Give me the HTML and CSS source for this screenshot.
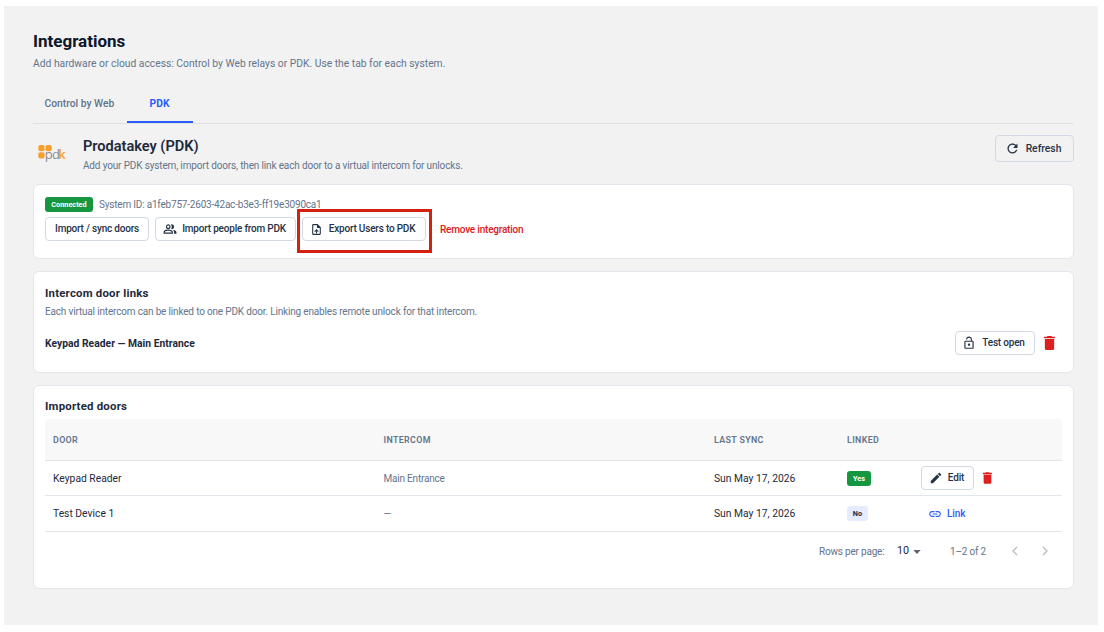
FILE: index.html
```html
<!DOCTYPE html>
<html lang="en">
<head>
<meta charset="utf-8">
<title>Integrations</title>
<link rel="stylesheet" href="styles.css">
</head>
<body>
<main class="page">
  <h1 class="page-title">Integrations</h1>
  <p class="page-sub">Add hardware or cloud access: Control by Web relays or PDK. Use the tab for each system.</p>
  <nav class="tabs">
    <a class="tab">Control by Web</a>
    <a class="tab tab-active">PDK</a>
  </nav>

  <header class="provider">
    <svg class="logo" viewBox="0 0 30 20" width="30" height="20">
      <g fill="#f5a22d"><rect x="0.300" y="0" width="6.3" height="6.3" rx="2"/><rect x="7.500" y="0" width="6.3" height="6.3" rx="2"/><rect x="0.300" y="7.2" width="6.3" height="6.3" rx="2"/></g>
      <text class="logo-text" x="6.8" y="14.2" fill="#888d96">pd</text><text class="logo-text logo-k" x="20.2" y="14.2" fill="#f5a22d">k</text>
    </svg>
    <div class="provider-text">
      <h2 class="provider-name">Prodatakey (PDK)</h2>
      <p class="provider-sub">Add your PDK system, import doors, then link each door to a virtual intercom for unlocks.</p>
    </div>
    <button class="btn btn-refresh"><svg class="icon" viewBox="0 0 24 24" width="15" height="15"><path d="M17.65 6.35C16.2 4.9 14.21 4 12 4c-4.42 0-7.99 3.58-7.99 8s3.57 8 7.99 8c3.73 0 6.84-2.55 7.73-6h-2.08c-.82 2.33-3.04 4-5.65 4-3.31 0-6-2.69-6-6s2.69-6 6-6c1.66 0 3.14.69 4.22 1.78L13 11h7V4l-2.35 2.35z"/></svg><span>Refresh</span></button>
  </header>

  <section class="card card-system">
    <div class="status"><span class="chip chip-green chip-connected">Connected</span><span class="system-id">System ID: a1feb757-2603-42ac-b3e3-ff19e3090ca1</span></div>
    <div class="actions">
      <button class="btn btn-sync"><span>Import / sync doors</span></button>
      <button class="btn btn-people"><svg class="icon" viewBox="0 0 24 24" width="14" height="14"><path d="M16.67 13.13C18.04 14.06 19 15.32 19 17v3h4v-3c0-2.18-3.57-3.47-6.33-3.87zM15 12c2.21 0 4-1.79 4-4s-1.79-4-4-4c-.47 0-.91.1-1.33.24C14.5 5.27 15 6.58 15 8s-.5 2.73-1.33 3.76c.42.14.86.24 1.33.24zM9 12c2.21 0 4-1.79 4-4s-1.79-4-4-4-4 1.79-4 4 1.79 4 4 4zm0-6c1.1 0 2 .9 2 2s-.9 2-2 2-2-.9-2-2 .9-2 2-2zM9 13c-2.67 0-8 1.34-8 4v3h16v-3c0-2.66-5.33-4-8-4zm6 5H3v-.99C3.2 16.29 6.3 15 9 15s5.8 1.29 6 2v1z"/></svg><span>Import people from PDK</span></button>
      <div class="export"><button class="btn btn-export"><svg class="icon" viewBox="0 0 24 24" width="13" height="13"><path d="M14 2H6c-1.1 0-1.99.9-1.99 2L4 20c0 1.1.89 2 1.99 2H18c1.1 0 2-.9 2-2V8l-6-6zm4 18H6V4h7v5h5v11zM8 15.01l1.41 1.41L11 14.84V19h2v-4.16l1.59 1.59L16 15.01 12.01 11 8 15.01z"/></svg><span>Export Users to PDK</span></button><i class="highlight"></i></div>
      <a class="remove">Remove integration</a>
    </div>
  </section>

  <section class="card card-links">
    <h3 class="card-title">Intercom door links</h3>
    <p class="card-sub">Each virtual intercom can be linked to one PDK door. Linking enables remote unlock for that intercom.</p>
    <div class="link-row">
      <strong class="link-name">Keypad Reader — Main Entrance</strong>
      <button class="btn btn-test"><svg class="icon" viewBox="0 0 24 24" width="14" height="14"><path d="M12 17c1.1 0 2-.9 2-2s-.9-2-2-2-2 .9-2 2 .9 2 2 2zm6-9h-1V6c0-2.76-2.24-5-5-5S7 3.24 7 6h1.900c0-1.710 1.390-3.100 3.100-3.100 1.710 0 3.100 1.390 3.100 3.100v2H6c-1.1 0-2 .9-2 2v10c0 1.100.9 2 2 2h12c1.100 0 2-.9 2-2V10c0-1.100-.9-2-2-2zm0 12H6V10h12v10z"/></svg><span>Test open</span></button>
      <svg class="trash" viewBox="5 3 14 18" width="11" height="14"><path d="M6 19c0 1.1.9 2 2 2h8c1.1 0 2-.9 2-2V7H6v12zM19 4h-3.500l-1-1h-5l-1 1H5v2h14V4z"/></svg>
    </div>
  </section>

  <section class="card card-doors">
    <h3 class="card-title">Imported doors</h3>
    <div class="table">
      <div class="row row-head"><span>DOOR</span><span>INTERCOM</span><span>LAST SYNC</span><span>LINKED</span><span></span></div>
      <div class="row row-first"><span>Keypad Reader</span><span class="muted">Main Entrance</span><span class="date">Sun May 17, 2026</span><span><b class="chip chip-green chip-yes">Yes</b></span>
        <span class="row-actions"><button class="btn btn-edit"><svg class="icon" viewBox="0 0 24 24" width="14" height="14"><path d="M3 17.250V21h3.750L17.810 9.940l-3.750-3.750L3 17.250zM20.710 7.040c.39-.39.39-1.020 0-1.410l-2.340-2.340c-.39-.39-1.020-.39-1.410 0l-1.830 1.830 3.750 3.750 1.830-1.830z"/></svg><span>Edit</span></button><svg class="trash" viewBox="5 3 14 18" width="9" height="12"><path d="M6 19c0 1.1.9 2 2 2h8c1.1 0 2-.9 2-2V7H6v12zM19 4h-3.500l-1-1h-5l-1 1H5v2h14V4z"/></svg></span></div>
      <div class="row row-second"><span>Test Device 1</span><span class="muted">—</span><span class="date">Sun May 17, 2026</span><span><b class="chip chip-no">No</b></span>
        <a class="link"><svg class="icon" viewBox="0 0 24 24" width="14" height="14"><path d="M3.900 12c0-1.710 1.390-3.100 3.100-3.100h4V7H7c-2.760 0-5 2.240-5 5s2.240 5 5 5h4v-1.900H7c-1.710 0-3.100-1.390-3.100-3.100zM8 13h8v-2H8v2zm9-6h-4v1.900h4c1.710 0 3.100 1.390 3.100 3.100s-1.390 3.100-3.100 3.100h-4V17h4c2.760 0 5-2.240 5-5s-2.240-5-5-5z"/></svg><span>Link</span></a></div>
    </div>
    <footer class="pager">
      <span class="pager-label">Rows per page:</span>
      <span class="pager-size">10</span>
      <svg class="caret" viewBox="0 0 8 4" width="8" height="4"><path d="M.3 0h7.400L4 4z"/></svg>
      <span class="pager-range">1–2 of 2</span>
      <svg class="chev" viewBox="0 0 6 10" width="6" height="10"><path d="M5 1 1 5l4 4"/></svg>
      <svg class="chev chev-next" viewBox="0 0 6 10" width="6" height="10"><path d="m1 1 4 4-4 4"/></svg>
    </footer>
  </section>
</main>
</body>
</html>
```
FILE: styles.css
```css
* { box-sizing: border-box; }
body { margin: 0; background: #fff; font-family: Roboto, "Liberation Sans", sans-serif; color: #1e293b; overflow: hidden; }
h1, h2, h3, p { margin: 0; }
.page { width: 1094px; height: 619px; margin: 6px 0 0 4px; padding: 25px 24px 0 29px; background: #f2f2f2; }
.page-title { font-size: 17px; line-height: 20px; font-weight: 700; color: #0f172a; }
.page-sub { margin-top: 6px; font-size: 10.3px; line-height: 14px; color: #64748b; }
.tabs { display: flex; height: 35px; margin-top: 18px; border-bottom: 1px solid #dde3e8; }
.tab { height: 34px; padding: 0 11.5px; font-size: 10.3px; line-height: 30px; font-weight: 500; color: #64748b; width: 94px; white-space: nowrap; }
.tab-active { width: 66px; padding: 0 1px 0 0; text-align: center; color: #2b5cff; font-weight: 700; border-bottom: 2px solid #2b5cff; }

.provider { display: flex; height: 60px; padding-top: 11px; align-items: flex-start; }
.logo { margin: 10px 15px 0 5px; flex: none; overflow: visible; }
.logo-text { font: 400 13px "Open Sans", sans-serif; letter-spacing: -.8px; }
.logo-k { font-weight: 600; }
.provider-text { flex: 1; }
.provider-name { font-size: 14.6px; line-height: 22px; font-weight: 600; letter-spacing: -.03px; }
.provider-sub { margin-top: 2px; font-size: 10px; line-height: 14px; letter-spacing: -.15px; color: #64748b; }

.btn { display: flex; align-items: center; justify-content: center; flex: none; margin: 0; padding: 0; height: 24px; border: 1px solid #d3d9e2; border-radius: 4px; background: #fff; font: 500 10px/14px Roboto, sans-serif; letter-spacing: -.2px; color: #253347; white-space: nowrap; gap: 5px; }
.icon { fill: currentColor; flex: none; }
.btn-refresh { width: 79px; height: 27px; padding-right: 3px; background: #f2f2f2; gap: 6px; font-size: 10.3px; letter-spacing: 0; }
.btn-sync { width: 104px; }
.btn-people { width: 141px; padding-right: 2px; }
.btn-export { width: 124px; padding-right: 3px; gap: 6px; }
.btn-test { width: 80px; padding-right: 3px; gap: 6px; }
.btn-edit { width: 53px; padding-right: 2px; }

.card { border: 1px solid #e2e6ed; border-radius: 6px; background: #fff; padding: 0 11px; }
.card-system { height: 75px; padding-top: 12px; }
.status { display: flex; align-items: center; height: 15px; }
.chip { display: inline-flex; align-items: center; justify-content: center; height: 15px; border-radius: 3px; font-size: 7.3px; font-weight: 700; line-height: 15px; }
.chip-green { background: #16963f; color: #fff; }
.chip-connected { width: 48px; }
.chip-yes { width: 24px; }
.chip-no { width: 21px; background: #e6ebff; color: #1e293b; }
.system-id { margin-left: 6px; font-size: 10px; line-height: 14px; letter-spacing: -.2px; color: #64748b; }
.actions { display: flex; align-items: center; gap: 6px; margin-top: 5px; }
.export { position: relative; }
.highlight { position: absolute; left: -5px; top: -8px; width: 135px; height: 44px; border: 3px solid #d3200f; }
.remove { margin-left: 8px; font-size: 10px; font-weight: 500; letter-spacing: -.2px; color: #dc2020; }

.card-links { height: 102px; margin-top: 12px; padding-top: 13px; }
.card-title { font-size: 11.4px; line-height: 16px; font-weight: 700; letter-spacing: .22px; }
.card-sub { margin-top: 4px; font-size: 10px; line-height: 14px; letter-spacing: -.17px; color: #64748b; }
.link-row { display: flex; align-items: center; height: 24px; margin-top: 12px; }
.link-name { flex: 1; font-size: 10.3px; font-weight: 700; letter-spacing: .03px; }
.trash { fill: #dc2020; flex: none; }
.link-row .trash { margin: 0 7px 0 9px; }

.card-doors { height: 204px; margin-top: 12px; padding-top: 12px; }
.table { margin-top: 5px; font-size: 10.3px; }
.row { display: grid; grid-template-columns: 330.5px 330.5px 133px 74px 1fr; align-items: center; padding-left: 8px; border-bottom: 1px solid #e2e6ed; }
.row-head { height: 42px; background: #f8f8f8; border-radius: 4px 4px 0 0; font-size: 8.9px; font-weight: 600; letter-spacing: .35px; color: #64748b; }
.row-first { height: 35px; }
.row-second { height: 36px; }
.muted { font-size: 10px; letter-spacing: -.2px; color: #64748b; }
.row > span { display: flex; align-items: center; }
.row-actions .trash { margin-left: 9px; }
.link { display: flex; align-items: center; gap: 5px; padding-left: 7px; font-size: 10px; letter-spacing: -.1px; font-weight: 500; color: #2b5cff; }
.pager { display: flex; align-items: center; height: 38px; padding-left: 774px; font-size: 10px; letter-spacing: -.2px; color: #64748b; white-space: nowrap; }
.pager-label { width: 78px; }
.pager-size { width: 16px; font-size: 10.8px; letter-spacing: 0; color: #1e293b; padding-bottom: 2px; }
.caret { fill: #5c6470; margin-top: 2px; }
.pager-range { width: 62px; margin-left: 29px; }
.chev { fill: none; stroke: #b4bac3; stroke-width: 1.2; }
.chev-next { margin-left: 24px; }
```
